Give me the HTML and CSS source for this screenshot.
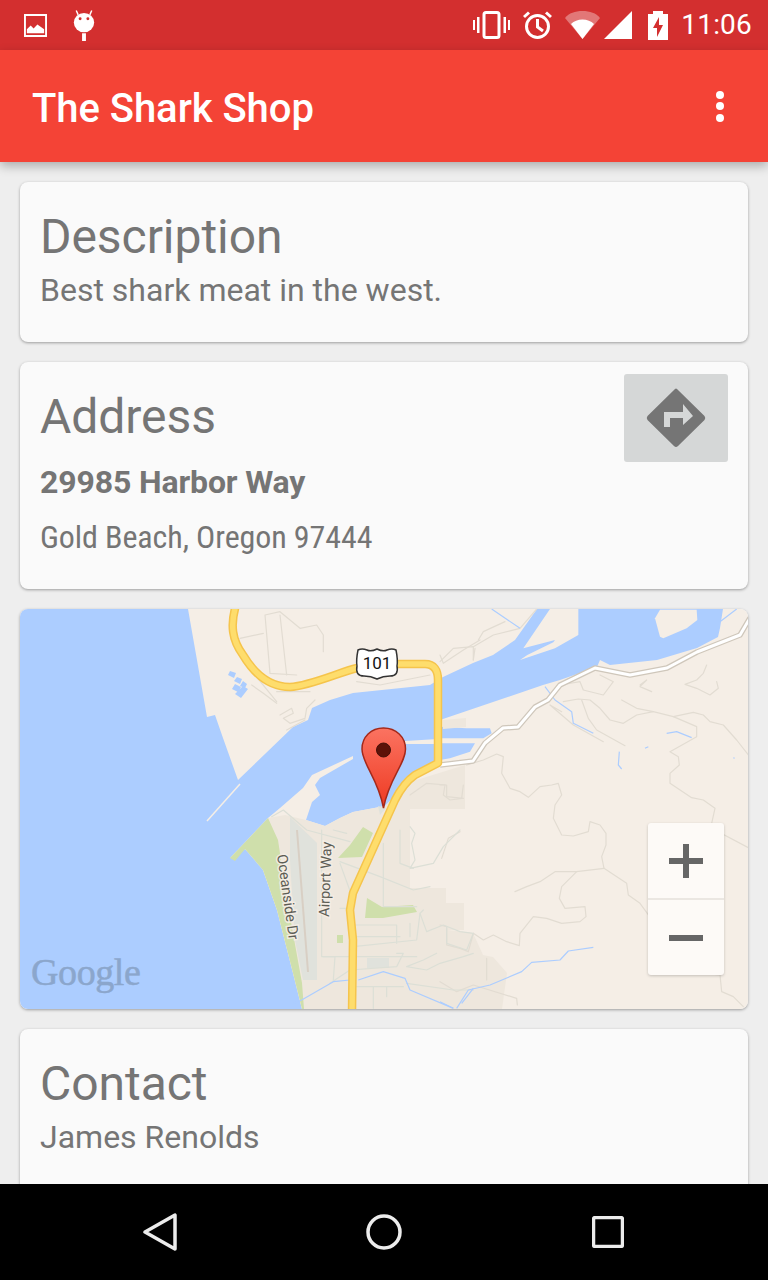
FILE: index.html
```html
<!DOCTYPE html>
<html lang="en">
<head>
<meta charset="utf-8">
<title>The Shark Shop</title>
<link rel="stylesheet" href="styles.css">
</head>
<body>
<div class="phone">
  <header class="status">
    <div class="status-left">
      <svg class="ic-img" viewBox="0 0 24 24"><path class="w" fill-rule="evenodd" d="M0 0H24V24H0ZM2 2V22H22V2Z"/><path class="w" d="M3 20V16L7 12L10 15L14 11L21 16V20Z"/></svg>
      <svg class="ic-droid" viewBox="0 0 22 32"><ellipse class="w" cx="11" cy="13" rx="10.500" ry="10"/><path class="w-thin" d="M5 5L3 0.500M17 5L19 0.500"/><rect class="w" x="9" y="24" width="4" height="8"/><circle class="red" cx="7" cy="9" r="1.500"/><circle class="red" cx="15" cy="9" r="1.500"/></svg>
    </div>
    <div class="status-right">
      <svg class="ic-vib" viewBox="0 0 37 28"><rect class="w-line" x="11" y="1.500" width="15" height="25" rx="2" /><path class="w" d="M0 9H2V19H0ZM4 6H6.500V22H4ZM30.500 6H33V22H30.500ZM35 9H37V19H35Z"/></svg>
      <svg class="ic-alarm" viewBox="0 0 29 28"><circle class="w-line" cx="14.500" cy="15.500" r="11"/><path class="w-line" d="M14.500 8V16L20 20M1 6L6 1.500M28 6L23 1.500"/></svg>
      <svg class="ic-wifi" viewBox="0 0 35 28"><path class="w-dim" d="M0 7C4 2 10 0 17.500 0S31 2 35 7L17.500 28Z"/><path class="w" d="M6 13C9 10 13 8.500 17.500 8.500S26 10 29 13L17.500 28Z"/></svg>
      <svg class="ic-sig" viewBox="0 0 28 28"><path class="w" d="M28 0V28H0Z"/></svg>
      <svg class="ic-bat" viewBox="0 0 20 29"><path class="w" fill-rule="evenodd" d="M5 0H15V3H20V29H0V3H5ZM11 6L5 17H9V26L15 14H11Z"/></svg>
      <span class="clock">11:06</span>
    </div>
  </header>
  <div class="appbar">
    <h1 class="title">The Shark Shop</h1>
    <div class="menu"><i></i><i></i><i></i></div>
  </div>
  <main class="content">
    <section class="card card-desc">
      <h2 class="heading">Description</h2>
      <p class="body-text">Best shark meat in the west.</p>
    </section>
    <section class="card card-addr">
      <div class="addr-text">
        <h2 class="heading">Address</h2>
        <p class="street">29985 Harbor Way</p>
        <p class="city">Gold Beach, Oregon 97444</p>
      </div>
      <button class="dir" type="button" aria-label="Directions">
        <svg viewBox="646 388 60 60"><path class="dir-sign" d="M676 388.500Q677 388.500 678 390L704.500 416Q706 418 704.500 420L678 446Q676 448 674 446L647.500 420Q646 418 647.500 416L674 390Q675 388.500 676 388.500Z"/><path class="dir-arrow" d="M664 427V412H683V404L693 416L683 425V418H670V427Z"/></svg>
      </button>
    </section>
    <section class="card card-map">
      <svg class="map" viewBox="20 609 728 400">
        <rect class="land" x="20" y="609" width="728" height="400"/>
        <!-- ocean, bay and river -->
        <path class="water" d="M20 609H188L207 717L215 715L223 738L238 780L293 727L308 720L312 708L330 700L353 693L430 685L443 677L473 663L493 655L515 640L537 609H723L720 628L718 637L697 648L657 660L610 665L600 660L597 667L560 680L543 685L440 720V765L410 780L385 806L353 812L340 818L325 826L306 820L312 802L320 795L315 785L320 778L353 759L353 756L312 775L303 788L280 808L268 818L230 858L245 849L263 870L277 910L293 973L302 1009H20Z"/>
        <path class="jetty" d="M207 821L240 784"/>
        <!-- river islands, drawn in crop space -->
        <g transform="translate(440 605) scale(.33333)">
          <path class="land" d="M330 12H415V90L345 130L240 165L262 150L340 112L345 105L250 130Z"/>
          <path class="land" d="M660 14H770L772 45L740 70L670 100L660 95L645 40Z"/>
          <path class="water" d="M0 365L80 370H150L155 385L130 400H0ZM0 415H105L90 440L30 460L0 465Z"/>
        </g>
        <path class="land" d="M405 741L438 739V744L405 744Z"/>
        <path class="water" d="M230 671l6 2-2 5-6-3ZM237 677l5 2-2 5-6-3ZM243 681l4 3-2 4-5-2ZM235 684l6 3-3 5-6-3ZM243 686l5 3-7 9-6-4Z"/>
        <!-- urban areas -->
        <path class="urban" d="M268 818L285 815L306 820L325 826L340 818L353 812L385 806L410 782L465 765V809H410V888H446V903H464V930H448L473 933L483 955L493 957L507 973L502 1009H302L293 973L277 910L263 870Z"/>
        <path class="urban" d="M443 720L466 718V727L443 729Z"/>
        <!-- green -->
        <path class="green" d="M268 818L230 858L235 861L245 849L263 870L277 910L293 973L302 1009L304 1009L302 983L287 900L278 840Z"/>
        <path class="green" d="M363 827L373 833L362 857L338 858L350 845ZM367 898L382 907L413 905L417 912L383 918L365 918Z"/>
        <path class="green" d="M337 935H343V943H337Z"/>
        <path class="air" d="M290 817L317 843V980H303L295 940L290 860Z"/>
        <path class="air" d="M367 958H389V968H367ZM380 815L386 808L378 806Z"/>
        <path class="runway" d="M297 830L308 972"/>
        <!-- minor roads and terrain, east half -->
        <g class="roads" transform="translate(440 605) scale(.33333)">
          <path d="M80 480L130 465L170 447L190 455L185 505L210 550L240 560L265 577L300 545L335 540L355 535L365 570L345 600L340 640L365 690L400 693L445 680L450 650L480 660L498 685L498 720L485 755L492 790"/>
          <path d="M492 790L410 800L345 800L300 830L260 845L225 860"/>
          <path d="M410 800L365 845L358 880L375 910L435 905L438 935L420 950L365 955L320 940L280 935L240 985L238 1022L200 1010L160 990L130 1005L100 985"/>
          <path d="M492 790L560 835L565 870L600 895L640 950L745 975L748 1090L790 1105L840 1110L845 1160L880 1175L910 1205"/>
          <path d="M815 655L825 610L790 585L755 578L690 535L690 505L718 480L715 455L690 440L770 395L770 365L700 335L640 320L590 310L545 285"/>
          <path d="M700 335L760 322L790 330L810 350L850 360L890 405L925 450"/>
          <path d="M815 670L925 728"/>
          <path d="M370 290L415 282L450 285L480 310L510 345L550 355L590 330L640 320"/>
          <path d="M425 285L445 340L470 375L555 422M365 320L330 300L400 360L490 410"/>
          <path d="M360 240L420 230L430 255L490 270L520 230L480 210M600 240L620 225L600 245L635 260"/>
          <path d="M800 180L790 205L770 225L735 238L770 250L810 270L835 250L830 230"/>
          <path d="M0 170L40 130L100 125L160 90L240 70L290 12M100 125L100 165M115 105L130 80L195 50"/>
          <path d="M0 960L20 965L20 1020L60 1030L85 1040L100 985M60 680L25 700L5 760"/>
          <path d="M0 540L15 540L10 570L30 585L65 580L70 540"/>
          <path d="M0 1130L50 1160L100 1140L230 1180L232 1200M140 1060L140 1125"/>
        </g>
        <!-- minor roads, north west -->
        <g class="roads" transform="translate(180 605) scale(.33333)">
          <path d="M255 30L270 205M300 30L320 210M255 30L300 20L360 70L410 60L430 90L430 140M180 100L250 85M225 210L290 290M270 205L350 210"/>
          <path d="M215 240L250 265L290 295M290 260L390 260M300 330L335 310L340 325L310 340L330 355L375 340L380 310L405 285M320 375L375 345"/>
          <path d="M530 230L600 240L750 210M780 150L790 175L850 135L900 105M885 130L880 165"/>
          <path d="M690 570L740 535L800 540L800 575L850 580"/>
        </g>
        <!-- town grid -->
        <g class="roads town" transform="translate(0 800) scale(.33333)">
          <path d="M815 50L850 30L920 90L1050 125M965 90V470H1005L1000 540M1000 90L1040 100"/>
          <path d="M1020 185L1140 230L1240 270L1290 260M1020 190L1060 300M1150 130V320H1250M1200 90V190L1240 205"/>
          <path d="M1020 325H1040M1060 375H1190V430M1060 410H1200M1060 440L1250 420L1260 340L1270 330M1230 370V410"/>
          <path d="M970 470H1250M1190 460H1210L1190 500L1050 510L990 550"/>
          <path d="M1310 460L1270 480L1220 500L1280 510L1320 490L1390 470L1420 460M1340 380V430L1400 450L1420 400L1380 395L1330 375L1280 395L1260 340"/>
          <path d="M1230 205L1300 190L1330 140L1380 90M1230 80L1245 100L1235 130L1245 180L1230 205"/>
          <path d="M1220 550L1360 570L1420 570M1070 560H1210M1120 560V625M1160 560V590"/>
        </g>
        <!-- streams -->
        <g class="stream" transform="translate(440 605) scale(.33333)">
          <path d="M315 245L345 285L395 320L400 355L460 385M680 385L710 380L755 398M615 430L625 425M538 440L535 480L545 492M840 50L890 12M155 12L240 70M880 458L884 460"/>
          <path d="M50 1210L85 1155L150 1140L245 1100L275 1072L360 1065L385 1038L460 1027M0 1190L40 1210"/>
        </g>
        <g class="stream" transform="translate(0 800) scale(.33333)">
          <path d="M880 610L905 600L1000 545L1050 540M1075 540L1150 515L1215 535L1230 570L1360 625M1385 610L1420 565"/>
        </g>
        <!-- state road -->
        <path class="road-out" d="M440 765L473 761L485 743L503 728L518 727L535 707L548 700L560 685L595 668L630 675L667 668L697 652L740 635L750 618"/>
        <path class="road-in" d="M440 765L473 761L485 743L503 728L518 727L535 707L548 700L560 685L595 668L630 675L667 668L697 652L740 635L750 618"/>
        <!-- highway -->
        <path class="hwy-out" d="M236 605C230 625 232 640 243 655C255 675 270 687 290 687C310 686 340 672 357 668L397 664H425C434 664 438 670 438 680V763L415 775C405 782 400 790 395 800L353 893L350 910L353 940L352 1012"/>
        <path class="hwy-in" d="M236 605C230 625 232 640 243 655C255 675 270 687 290 687C310 686 340 672 357 668L397 664H425C434 664 438 670 438 680V763L415 775C405 782 400 790 395 800L353 893L350 910L353 940L352 1012"/>
        <!-- labels -->
        <path class="shield" d="M358 650Q362 648 367 650Q371 652 377 649Q383 652 387 650Q392 648 396 650Q398 660 397 666Q399 676 390 676Q383 676 377 679Q371 676 364 676Q355 676 357 666Q356 660 358 650Z"/>
        <text class="shield-text" x="377" y="669">101</text>
        <g class="label">
          <text transform="translate(277 855) rotate(82)">Oceanside Dr</text>
          <text transform="translate(329 917) rotate(-88)">Airport Way</text>
        </g>
        <text class="google" x="31" y="985">Google</text>
        <!-- pin -->
        <defs>
          <linearGradient id="pin" x1="0" y1="0" x2="0" y2="1"><stop offset="0" stop-color="#fb7361"/><stop offset="1" stop-color="#ee3a22"/></linearGradient>
        </defs>
        <path class="pin" d="M383.500 728C371 728 362 737 362 749C362 764 378 778 383.500 808C389 778 405.500 764 405.500 749C405.500 737 396 728 383.500 728Z"/>
        <circle class="pin-dot" cx="383.500" cy="750" r="7"/>
      </svg>
      <div class="zoom">
        <div class="zoom-btn"><svg viewBox="0 0 34 34"><path class="zoom-glyph" d="M14 0H20V14H34V20H20V34H14V20H0V14H14Z"/></svg></div>
        <div class="zoom-btn zoom-minus"><svg viewBox="0 0 34 6"><path class="zoom-glyph" d="M0 0H34V6H0Z"/></svg></div>
      </div>
    </section>
    <section class="card card-contact">
      <h2 class="heading">Contact</h2>
      <p class="body-text">James Renolds</p>
    </section>
  </main>
  <nav class="navbar">
    <svg class="nav-back" viewBox="0 0 34 38"><path d="M2 19L32 2V36Z"/></svg>
    <svg class="nav-home" viewBox="0 0 36 36"><circle cx="18" cy="18" r="16"/></svg>
    <svg class="nav-recent" viewBox="0 0 32 32"><rect x="1.500" y="1.500" width="29" height="29" rx="2"/></svg>
  </nav>
</div>
</body>
</html>
```

FILE: styles.css
```css
* { box-sizing: border-box; }
html, body { margin: 0; padding: 0; }
body { background: #eee; font-family: Roboto, "Noto Sans", sans-serif; }
h1, h2, p { margin: 0; font-weight: inherit; }
svg { display: block; }

.phone { width: 768px; height: 1280px; display: flex; flex-direction: column; overflow: hidden; background: #eee; }

.status { height: 50px; flex: none; background: #d32f2f; display: flex; justify-content: space-between; align-items: center; padding: 0 16px 0 24px; }
.status-left, .status-right { display: flex; align-items: center; }
.w { fill: #fff; }
.w-dim { fill: #fff; opacity: .35; }
.w-line { fill: none; stroke: #fff; stroke-width: 3; }
.w-thin { fill: none; stroke: #fff; stroke-width: 1.500; }
.red { fill: #d32f2f; }
.ic-img { width: 23px; height: 23px; }
.ic-droid { width: 22px; height: 31px; margin-left: 26px; }
.ic-vib { width: 37px; height: 28px; }
.ic-alarm { width: 29px; height: 28px; margin-left: 13px; }
.ic-wifi { width: 35px; height: 28px; margin-left: 13px; }
.ic-sig { width: 28px; height: 28px; margin-left: 4px; }
.ic-bat { width: 20px; height: 29px; margin-left: 16px; }
.clock { color: #fff; font-size: 28px; line-height: 28px; margin-left: 13px; letter-spacing: .2px; }

.appbar { height: 112px; flex: none; background: #f44336; display: flex; align-items: center; justify-content: space-between; padding: 0 44px 0 32px; box-shadow: 0 4px 10px rgba(0,0,0,.28); position: relative; z-index: 2; }
.title { color: #fff; font-size: 40px; font-weight: 500; line-height: 48px; margin-top: 6px; letter-spacing: -.05px; }
.menu { display: flex; flex-direction: column; gap: 3.500px; }
.menu i { display: block; width: 8px; height: 8px; border-radius: 50%; background: #fff; }

.content { flex: 1; min-height: 0; overflow: hidden; padding: 20px 20px 0; display: flex; flex-direction: column; gap: 20px; }
.card { flex: none; background: #fafafa; border-radius: 8px; box-shadow: 0 1px 3px rgba(0,0,0,.35); color: #757575; }
.card-desc { height: 160px; padding: 27px 20px 0; }
.card-addr { height: 227px; padding: 12px 20px 0 20px; display: flex; justify-content: space-between; align-items: flex-start; }
.card-map { height: 400px; position: relative; overflow: hidden; }
.card-contact { height: 180px; padding: 27px 20px 0; }
.heading { font-size: 48px; line-height: 56px; letter-spacing: -.05px; }
.body-text { font-size: 32px; line-height: 50px; }
.addr-text { padding-top: 15px; }
.street { font-size: 32px; font-weight: 700; line-height: 40px; margin-top: 17px; letter-spacing: -.13px; }
.city { font-size: 32px; line-height: 40px; margin-top: 15px; font-stretch: 75%; letter-spacing: -.09px; }
.dir { width: 104px; height: 88px; flex: none; padding: 0; border: 0; border-radius: 3px; background: #d5d7d7; display: flex; align-items: center; justify-content: center; }
.dir svg { width: 60px; height: 60px; }
.dir-sign { fill: #757575; }
.dir-arrow { fill: #d5d7d7; }

.map { width: 728px; height: 400px; }
.land { fill: #f5eee6; }
.water { fill: #accdff; }
.jetty { fill: none; stroke: #f5eee6; stroke-width: 1.500; }
.urban { fill: #eee7dd; }
.green { fill: #cfdfab; }
.air { fill: #e0e2dc; }
.runway { fill: none; stroke: #d8cfc4; stroke-width: 2; }
.roads { fill: none; stroke: #e2dcd2; stroke-linejoin: round; stroke-linecap: round; }
.roads path, .stream path { vector-effect: non-scaling-stroke; stroke-width: 1.200px; }
.town { stroke: #dcdfd6; }
.stream { fill: none; stroke: #accdff; stroke-linejoin: round; }
.road-out { fill: none; stroke: #cfc7bb; stroke-width: 5.500; stroke-linejoin: round; }
.road-in { fill: none; stroke: #fff; stroke-width: 3; stroke-linejoin: round; }
.hwy-out { fill: none; stroke: #f5c44c; stroke-width: 8.500; stroke-linejoin: round; }
.hwy-in { fill: none; stroke: #fedd6c; stroke-width: 5.500; stroke-linejoin: round; }
.shield { fill: #fff; stroke: #333; stroke-width: 1.500; }
.shield-text { font-family: Roboto, sans-serif; font-size: 17px; fill: #111; text-anchor: middle; }
.label { font-family: Roboto, sans-serif; font-size: 14.500px; fill: #5d5d55; stroke: #f5eee6; stroke-width: 3px; paint-order: stroke; stroke-opacity: .85; }
.google { font-family: "Liberation Serif", serif; font-size: 38px; letter-spacing: -.4px; fill: #8ba6cc; stroke: #8ba6cc; stroke-width: .5px; }
.pin { fill: url(#pin); stroke: #a5291a; stroke-width: 1.500; }
.pin-dot { fill: #5c1208; stroke: #451008; stroke-width: 1; }

.zoom { position: absolute; left: 628px; top: 214px; width: 76px; height: 152px; border-radius: 3px; background: #fdfaf7; box-shadow: 0 1px 3px rgba(0,0,0,.2); display: flex; flex-direction: column; }
.zoom-btn { flex: 1; display: flex; align-items: center; justify-content: center; }
.zoom-btn svg { width: 34px; height: 34px; }
.zoom-minus { border-top: 2px solid #ebe7e2; }
.zoom-minus svg { height: 6px; }
.zoom-glyph { fill: #666; }

.navbar { height: 96px; flex: none; background: #000; position: relative; z-index: 2; display: grid; grid-template-columns: repeat(3, 224px); align-items: center; justify-items: center; padding-left: 48px; }
.navbar svg { fill: none; stroke: #ececec; stroke-width: 3.500; stroke-linejoin: round; margin-top: -1px; }
.nav-back { width: 34px; height: 38px; }
.nav-home { width: 36px; height: 36px; }
.nav-recent { width: 32px; height: 32px; }
```
